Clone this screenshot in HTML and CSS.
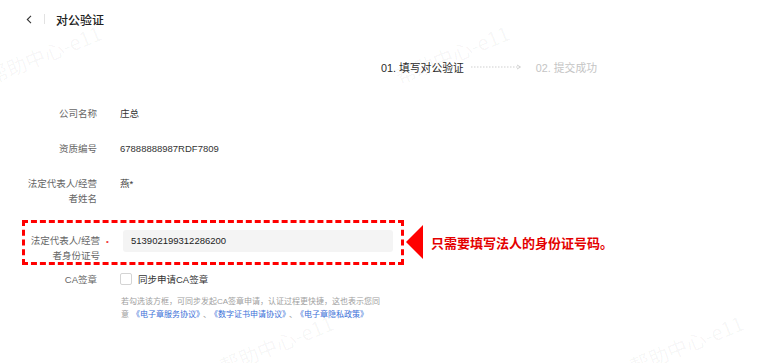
FILE: index.html
```html
<!DOCTYPE html>
<html lang="zh-CN">
<head>
    <meta charset="UTF-8">
    <meta name="viewport" content="width=device-width, initial-scale=1.0">
    <title>对公验证</title>
    <link rel="stylesheet" href="styles.css">
</head>
<body>

    <div class="pagina">
        <div class="cabecera">
            <svg class="volver" width="6" height="9" viewBox="0 0 6 9">
                <path d="M5 0.8 L1.3 4.5 L5 8.2" fill="none" stroke="#333" stroke-width="1.1"/>
            </svg>
            <span class="separador"></span>
            <span class="titulo">对公验证</span>
        </div>

        <div class="pasos">
            <span class="paso activo">01. 填写对公验证</span>
            <svg class="flecha-paso" width="52" height="6" viewBox="0 0 52 6">
                <line x1="0" y1="3" x2="48" y2="3" stroke="#cfcfcf" stroke-width="1" stroke-dasharray="1.5 1.5"/>
                <path d="M46 1 L49.5 3 L46 5" fill="none" stroke="#cfcfcf" stroke-width="1"/>
            </svg>
            <span class="paso">02. 提交成功</span>
        </div>

        <div class="formulario">
            <div class="fila">
                <div class="etiqueta">公司名称</div>
                <div class="marca"></div>
                <div class="valor">庄总</div>
            </div>
            <div class="fila">
                <div class="etiqueta">资质编号</div>
                <div class="marca"></div>
                <div class="valor">67888888987RDF7809</div>
            </div>
            <div class="fila">
                <div class="etiqueta">法定代表人/经营<br>者姓名</div>
                <div class="marca"></div>
                <div class="valor">燕*</div>
            </div>

            <div class="fila-destacada">
                <div class="recuadro">
                    <div class="etiqueta etiqueta-corta">法定代表人/经营<br>者身份证号</div>
                    <div class="marca"><span class="obligatorio">•</span></div>
                    <div class="entrada">513902199312286200</div>
                </div>
                <div class="triangulo"></div>
                <div class="nota">只需要填写法人的身份证号码。</div>
            </div>

            <div class="fila fila-ca">
                <div class="etiqueta">CA签章</div>
                <div class="marca"></div>
                <label class="casilla"><span class="cuadro"></span>同步申请CA签章</label>
            </div>

            <div class="ayuda">
                若勾选该方框，可同步发起CA签章申请，认证过程更快捷，这也表示您同意<a href="#">《电子章服务协议》</a>、<a href="#">《数字证书申请协议》</a>、<a href="#">《电子章隐私政策》</a>
            </div>
        </div>

        <div class="marcas-agua">
            <span class="agua" style="left:-6px; top:62px;">帮助中心-e11</span>
            <span class="agua" style="left:402px; top:62px;">帮助中心-e11</span>
            <span class="agua" style="left:226px; top:352px;">帮助中心-e11</span>
            <span class="agua" style="left:636px; top:352px;">帮助中心-e11</span>
        </div>
    </div>

</body>
</html>
```

FILE: styles.css
```css
body {
    margin: 0;
    font-family: 'Liberation Sans', 'Noto Sans CJK SC', sans-serif;
    color: #333;
    background: #fff;
    overflow: hidden;
}

.pagina {
    position: relative;
    width: 776px;
    height: 363px;
    overflow: hidden;
}

.cabecera {
    display: flex;
    align-items: center;
    height: 38px;
    padding-left: 26px;
}

.volver {
    display: block;
}

.separador {
    width: 1px;
    height: 10px;
    background: #e2e2e2;
    margin: 0 11px 0 12px;
}

.titulo {
    font-size: 12px;
    font-weight: 500;
    color: #222;
}

.pasos {
    display: flex;
    align-items: center;
    height: 20px;
    margin-top: 19px;
    padding-left: 381px;
    font-size: 10.8px;
}

.paso {
    color: #c4c4c4;
}

.paso.activo {
    color: #2a2a2a;
}

.flecha-paso {
    margin: 0 13px 0 7px;
}

.formulario {
    margin-top: 29px;
    font-size: 9.5px;
    line-height: 15px;
}

.fila {
    display: flex;
    margin-bottom: 20px;
}

.etiqueta {
    width: 97px;
    text-align: right;
    color: #666;
}

.marca {
    width: 23px;
}

.valor {
    color: #333;
}

.fila-destacada {
    display: flex;
    align-items: center;
    margin-top: -6.5px;
}

.recuadro {
    display: flex;
    align-items: flex-start;
    width: 376px;
    margin-left: 22px;
    padding: 7px 0;
    border: 3px dashed #f00;
}

.etiqueta-corta {
    width: 75px;
    height: 22px;
    padding-top: 3px;
}

.recuadro .marca {
    width: 23px;
    height: 22px;
    padding-top: 3px;
    padding-left: 6px;
    box-sizing: border-box;
}

.obligatorio {
    color: #f23c3c;
    font-size: 8px;
}

.entrada {
    width: 270px;
    height: 22px;
    line-height: 22px;
    padding-left: 8px;
    box-sizing: border-box;
    background: #f4f4f4;
    border-radius: 3px;
    color: #222;
    font-size: 9.5px;
}

.triangulo {
    width: 0;
    height: 0;
    border-top: 17px solid transparent;
    border-bottom: 17px solid transparent;
    border-right: 17px solid #f00;
    margin-left: 2px;
}

.nota {
    margin-left: 8px;
    color: #e40000;
    font-size: 13px;
    font-weight: bold;
    font-family: 'Noto Sans CJK SC', sans-serif;
}

.fila-ca {
    margin-top: 7px;
    margin-bottom: 8px;
}

.casilla {
    display: flex;
    align-items: center;
    color: #333;
}

.cuadro {
    width: 10px;
    height: 10px;
    border: 1px solid #d4d4d4;
    border-radius: 2px;
    margin-right: 6px;
}

.ayuda {
    width: 262px;
    margin-left: 121px;
    font-size: 8px;
    line-height: 13px;
    color: #a0a0a0;
}

.ayuda a {
    color: #3a6fd8;
    text-decoration: none;
    margin: 0 3px;
}

.marcas-agua {
    position: absolute;
    top: 0;
    left: 0;
    width: 100%;
    height: 100%;
    pointer-events: none;
}

.agua {
    position: absolute;
    font-size: 20px;
    line-height: 28px;
    color: rgba(0, 0, 0, 0.045);
    font-family: 'Noto Sans CJK SC', sans-serif;
    transform: rotate(-22deg);
    transform-origin: left bottom;
    white-space: nowrap;
}
```
